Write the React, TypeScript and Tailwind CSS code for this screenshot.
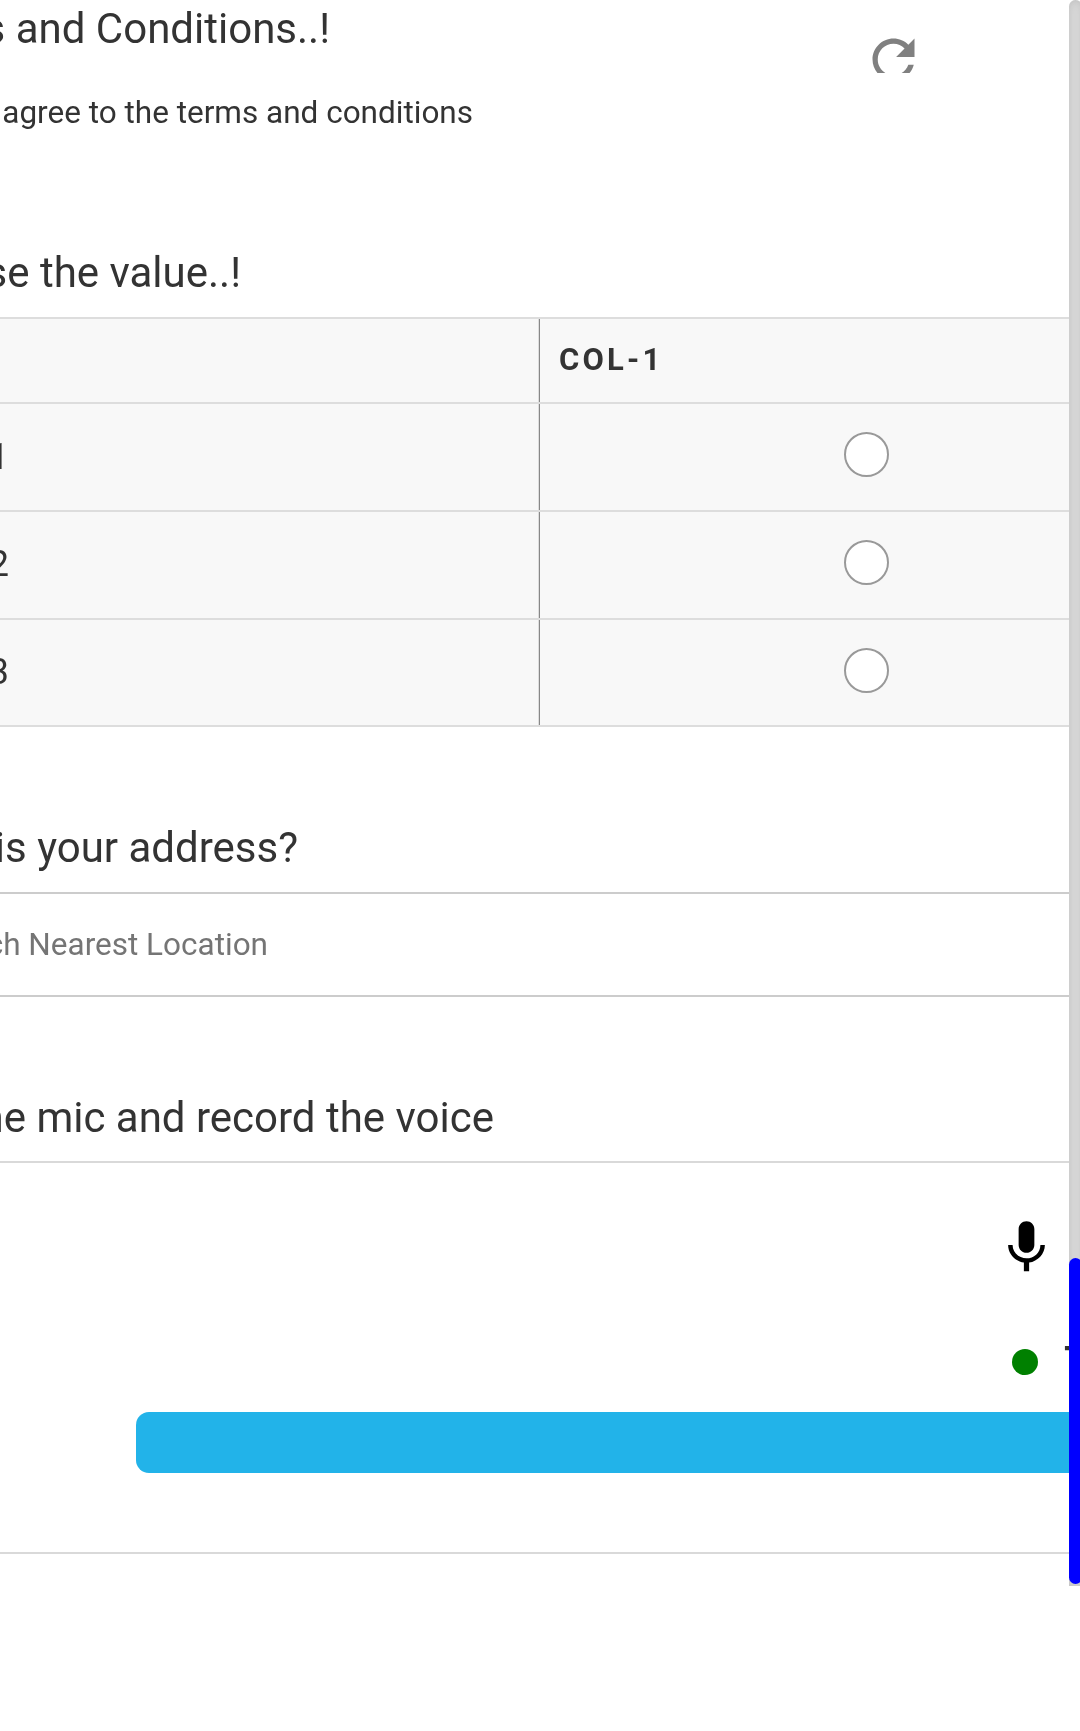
const ROWS = [
  { label: '1', width: 'w-[9px]', height: 'h-[108px]', labelBottom: 'pb-0', radioTop: 'pt-[28px]' },
  { label: '2', width: 'w-[9px]', height: 'h-[108px]', labelBottom: 'pb-[2px]', radioTop: 'pt-[28px]' },
  { label: '3', width: 'w-[9px]', height: 'h-[107px]', labelBottom: 'pb-[2px]', radioTop: 'pt-[27.5px]' },
];

function Heading({ text, width }: { text: string; width: string }) {
  return (
    <h2 className={`flex h-[51px] justify-end overflow-hidden pt-px text-[42px] leading-[50px] whitespace-nowrap ${width}`}>
      <span>{text}</span>
    </h2>
  );
}

function RefreshIcon() {
  return (
    <svg viewBox="0 0 24 24" className="block size-[63px] shrink-0 fill-[#808080]">
      <path d="M17.65 6.35C16.2 4.9 14.21 4 12 4c-4.42 0-7.99 3.58-7.99 8s3.57 8 7.99 8c3.73 0 6.84-2.55 7.73-6h-2.08c-.82 2.33-3.04 4-5.65 4-3.31 0-6-2.69-6-6s2.69-6 6-6c1.66 0 3.14.69 4.22 1.78L13 11h7V4l-2.35 2.35z" />
    </svg>
  );
}

function MicIcon() {
  return (
    <svg viewBox="0 0 24 24" className="block size-[63px] fill-black">
      <path d="M12 14c1.66 0 2.99-1.34 2.99-3L15 5c0-1.66-1.34-3-3-3S9 3.34 9 5v6c0 1.66 1.34 3 3 3zm5.3-3c0 3-2.54 5.1-5.3 5.1S6.7 14 6.7 11H5c0 3.41 2.72 6.23 6 6.72V21h2v-3.28c3.28-.48 6-3.3 6-6.72h-1.7z" />
    </svg>
  );
}

export default function App() {
  return (
    <div className="flex h-[1731px] w-[1080px] items-start overflow-hidden bg-white font-['Roboto',sans-serif] text-[#333333]">
      <main className="w-[1069px] shrink-0 overflow-hidden will-change-transform">
        <section className="flex h-[247px] justify-between">
          <div className="pt-[3px]">
            <Heading text="s and Conditions..!" width="w-[330px]" />
            <p className="mt-[40px] flex h-[38px] w-[473px] justify-end overflow-hidden text-[31.5px] leading-[38px] whitespace-nowrap">
              <span>agree to the terms and conditions</span>
            </p>
          </div>
          <div className="mt-[27px] mr-[144px] h-[46px] overflow-hidden pt-[0.5px]">
            <RefreshIcon />
          </div>
        </section>

        <section className="h-[575px]">
          <Heading text="se the value..!" width="w-[241px]" />
          <div className="mt-[19px] border-t-2 border-[#dddddd] bg-[#f8f8f8]">
            <div className="flex h-[85px] border-b-2 border-[#dddddd]">
              <div className="w-[539px] border-r border-[#dddddd]" />
              <div className="flex flex-1 items-center border-l border-[#888888] pl-[19px] text-[31px] font-bold tracking-[3.2px]">
                COL-1
              </div>
            </div>
            {ROWS.map((row) => (
              <div key={row.label} className={`flex border-b-2 border-[#dddddd] ${row.height}`}>
                <div className={`flex w-[539px] items-center border-r border-[#dddddd] ${row.labelBottom}`}>
                  <span className={`flex justify-end overflow-hidden text-[36px] ${row.width}`}>
                    <span>{row.label}</span>
                  </span>
                </div>
                <div className={`flex-1 border-l border-[#888888] pl-[304px] ${row.radioTop}`}>
                  <div className="size-[45px] rounded-full border-2 border-[#999999] bg-white" />
                </div>
              </div>
            ))}
          </div>
        </section>

        <section className="h-[270px]">
          <Heading text="is your address?" width="w-[298px]" />
          <div className="mt-[19px] flex h-[105px] items-center border-y-2 border-[#cccccc] pt-px">
            <div className="flex w-[268px] justify-end overflow-hidden text-[31.5px] whitespace-nowrap text-[#757575]">
              <span>ch Nearest Location</span>
            </div>
          </div>
        </section>

        <section>
          <Heading text="he mic and record the voice" width="w-[494px]" />
          <div className="mt-[18px] h-[393px] border-y-2 border-[#d9d9d9]">
            <div className="pt-[53px] pl-[995px]">
              <MicIcon />
            </div>
            <div className="mt-[58px] flex h-[50px] items-center gap-[26px] pl-[1012px]">
              <span className="size-[26px] shrink-0 rounded-full bg-[#008000]" />
              <span className="text-[42px] leading-[50px] font-medium">T</span>
            </div>
            <div className="mt-[25px] ml-[136px] h-[61px] rounded-l-[13px] bg-[#22b3e9]" />
          </div>
        </section>
      </main>

      <div className="flex h-[1586px] w-[13px] shrink-0 flex-col justify-end rounded-t-[7px] bg-[#dadada] pb-[2px] shadow-[inset_0_0_10px_#bebebe]">
        <div className="h-[326px] rounded-[7px] bg-[#0000ff]" />
      </div>
    </div>
  );
}
